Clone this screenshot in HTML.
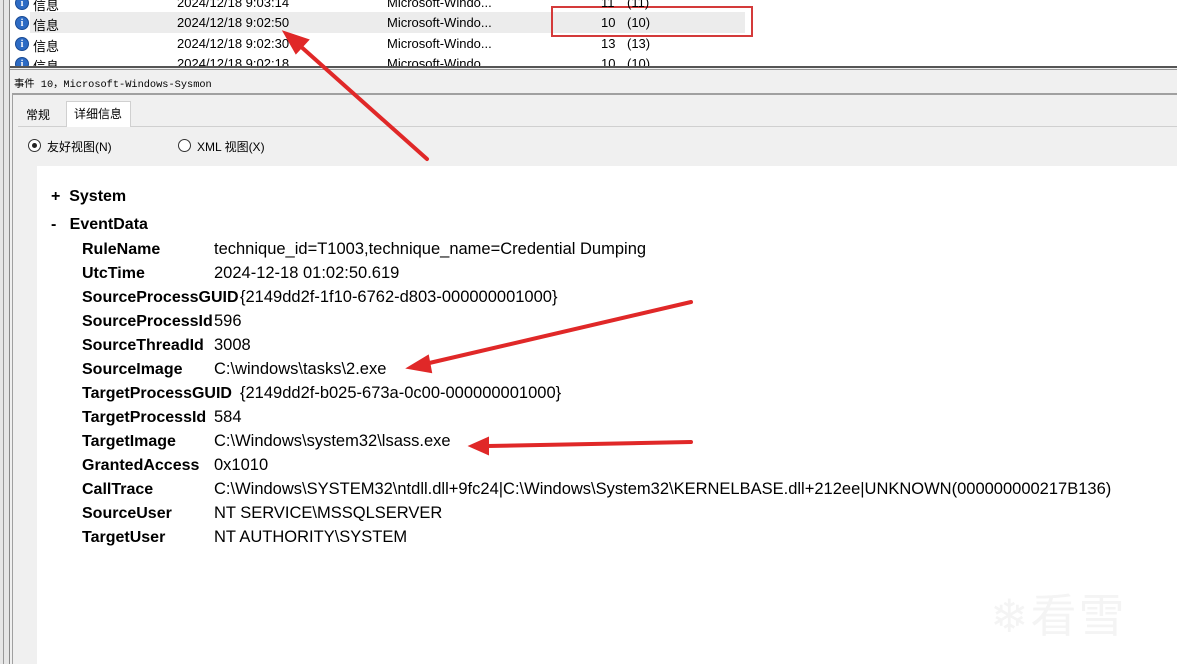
<!DOCTYPE html>
<html><head><meta charset="utf-8"><style>
body{margin:0;width:1177px;height:664px;overflow:hidden;background:#f0f0f0;position:relative;font-family:"Liberation Sans","Noto Sans CJK SC",sans-serif;}
.a{position:absolute;white-space:nowrap}
.s{font-size:12px;color:#000}
.r{font-size:13px;color:#000}
.k{font-weight:bold;font-size:16px;color:#000}
.v{font-size:16.5px;color:#000}
</style></head><body>
<!-- left strip -->
<div class="a" style="left:0;top:0;width:9px;height:664px;background:#e6e6e6;border-right:1px solid #888"></div>
<div class="a" style="left:3px;top:0;width:1px;height:664px;background:#999"></div>
<!-- list -->
<div class="a" style="left:10px;top:0;width:1167px;height:66px;background:#fff;overflow:hidden">
<div class="a" style="left:20px;top:12px;width:715px;height:21px;background:#ececec"></div>
<div class="a" style="left:541px;top:6px;width:202px;height:31px;border:2px solid #d43a3a;box-sizing:border-box"></div>
<div id="rows"></div>
</div>
<div class="a" style="left:10px;top:66px;width:1167px;height:2px;background:#555"></div>
<div class="a" style="left:10px;top:69px;width:1167px;height:1px;background:#999"></div>
<!-- header -->
<div class="a" style="left:14px;top:75px;font-family:'Liberation Mono','Noto Sans CJK SC',monospace;font-size:10.3px">事件 10，Microsoft-Windows-Sysmon</div>
<div class="a" style="left:12px;top:93px;width:1165px;height:2px;background:#a0a0a0"></div>
<div class="a" style="left:12px;top:95px;width:1px;height:569px;background:#a0a0a0"></div>
<!-- tabs -->
<div class="a" style="left:18px;top:126px;width:1159px;height:1px;background:#d0d0d0"></div>
<div class="a s" style="left:26px;top:106px">常规</div>
<div class="a" style="left:66px;top:101px;width:63px;height:26px;background:#fff;border:1px solid #d0d0d0;border-bottom:none"></div>
<div class="a s" style="left:74px;top:105px">详细信息</div>
<div class="a" style="left:18px;top:127px;width:1159px;height:537px;background:#f0f0f0"></div>
<div class="a" style="left:28px;top:139px;width:11px;height:11px;border:1px solid #333;border-radius:50%;background:#fff"></div>
<div class="a" style="left:32px;top:143px;width:5px;height:5px;border-radius:50%;background:#222"></div>
<div class="a s" style="left:47px;top:138px">友好视图(N)</div>
<div class="a" style="left:178px;top:139px;width:11px;height:11px;border:1px solid #333;border-radius:50%;background:#fff"></div>
<div class="a s" style="left:197px;top:138px">XML 视图(X)</div>
<div class="a" style="left:37px;top:166px;width:1140px;height:498px;background:#fff"></div>
<div class="a k" style="left:51px;top:188px">+&nbsp;&nbsp;System</div>
<div class="a k" style="left:51px;top:216px">-&nbsp;&nbsp;&nbsp;EventData</div>
<div id="kv"></div>
<!-- watermark -->
<div class="a" style="left:990px;top:580px;font-size:46px;color:#f4f4f4;letter-spacing:2px">❄看雪</div>
<svg class="a" style="left:0;top:0" width="1177" height="664">
<g stroke="#e02828" stroke-width="4" stroke-linecap="round" fill="#e02828">
<line x1="427" y1="159" x2="298" y2="44"/>
<polygon points="284,32 308,40 296,53" stroke-width="2"/>
<line x1="691" y1="302" x2="425" y2="364"/>
<polygon points="408,368 428,356 431,372" stroke-width="2"/>
<line x1="691" y1="442" x2="488" y2="446"/>
<polygon points="470,446 488,438 488,454" stroke-width="2"/>
</g>
</svg>
<script>
var r=[[-5,"9:03:14","11","(11)"],[15,"9:02:50","10","(10)"],[36,"9:02:30","13","(13)"],[56,"9:02:18","10","(10)"]],h="";
r.forEach(function(x){h+='<div class="a" style="left:5px;top:'+(x[0]+1)+'px;width:14px;height:14px;border-radius:50%;background:#2d6bc4;border:1px solid #1a4b94;box-sizing:border-box;color:#fff;font:bold 10px Liberation Serif;text-align:center;line-height:13px">i</div>'+
'<div class="a r" style="left:23px;top:'+x[0]+'px">信息</div><div class="a r" style="left:167px;top:'+x[0]+'px">2024/12/18 '+x[1]+'</div><div class="a r" style="left:377px;top:'+x[0]+'px">Microsoft-Windo...</div><div class="a r" style="left:591px;top:'+x[0]+'px">'+x[2]+'</div><div class="a r" style="left:617px;top:'+x[0]+'px">'+x[3]+'</div>';});
document.getElementById("rows").innerHTML=h;
var d=[["RuleName","technique_id=T1003,technique_name=Credential Dumping"],["UtcTime","2024-12-18 01:02:50.619"],["SourceProcessGUID","{2149dd2f-1f10-6762-d803-000000001000}"],["SourceProcessId","596"],["SourceThreadId","3008"],["SourceImage","C:\\windows\\tasks\\2.exe"],["TargetProcessGUID","{2149dd2f-b025-673a-0c00-000000001000}"],["TargetProcessId","584"],["TargetImage","C:\\Windows\\system32\\lsass.exe"],["GrantedAccess","0x1010"],["CallTrace","C:\\Windows\\SYSTEM32\\ntdll.dll+9fc24|C:\\Windows\\System32\\KERNELBASE.dll+212ee|UNKNOWN(000000000217B136)"],["SourceUser","NT SERVICE\\MSSQLSERVER"],["TargetUser","NT AUTHORITY\\SYSTEM"]],g="";
d.forEach(function(x,i){var t=241+24*i;
g+='<div class="a k" style="left:82px;top:'+t+'px">'+x[0]+'</div><div class="a v" style="left:'+(x[0].indexOf("GUID")>0?240:214)+'px;top:'+(t-1)+'px">'+x[1]+'</div>';});
document.getElementById("kv").innerHTML=g;
</script>
</body></html>
